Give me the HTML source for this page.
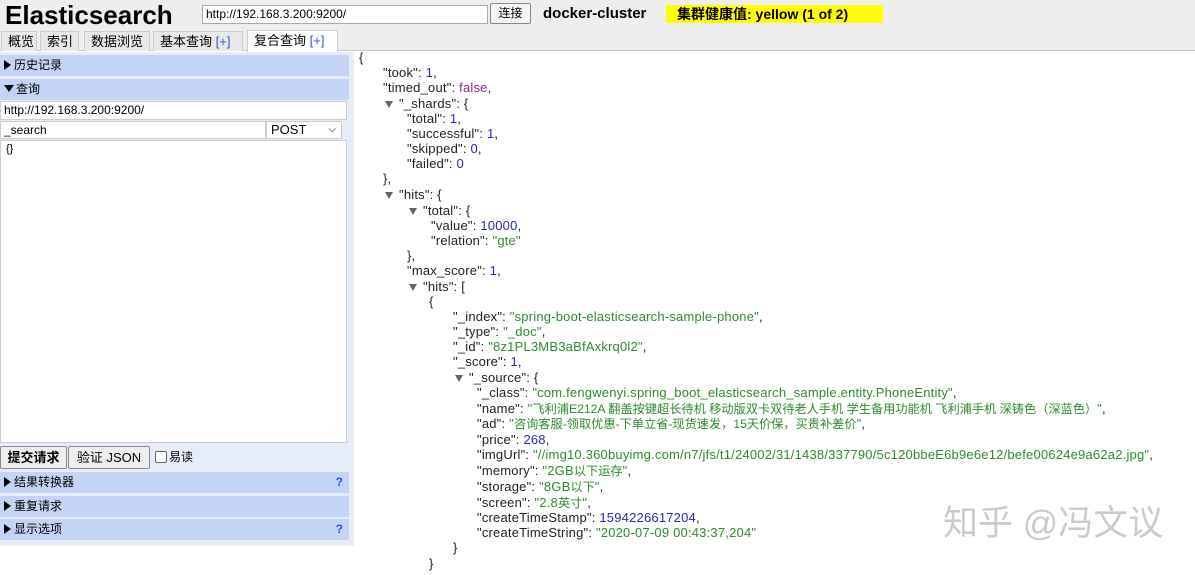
<!DOCTYPE html>
<html><head><meta charset="utf-8"><style>
body{margin:0;width:1195px;height:575px;background:#fff;font-family:"Liberation Sans","Noto Sans CJK SC",sans-serif;position:relative;overflow:hidden;font-size:12px;color:#000}
.a{position:absolute;white-space:nowrap}
.hdr{left:0;top:0;width:1195px;height:50px;background:#eeeeee;border-bottom:1px solid #c8c8c8}
.tab{top:31px;height:20px;border:1px solid #ccc;border-bottom:none;background:#e8e8e8;font-size:13px;line-height:20px;padding:0 6px;box-sizing:border-box}
.bar{left:0;width:349px;height:21px;background:#c4d4f6;font-size:12px;line-height:21px;padding-left:4px;box-sizing:border-box}
.tri{display:inline-block;width:0;height:0;border-top:5px solid transparent;border-bottom:5px solid transparent;border-left:7px solid #000;margin-right:3px;vertical-align:-1px}
.trid{display:inline-block;width:0;height:0;border-left:5px solid transparent;border-right:5px solid transparent;border-top:7px solid #000;margin-right:2px;vertical-align:1px}
.q{position:absolute;right:6px;top:0;color:#3355cc;font-weight:bold}
.j{position:absolute;white-space:nowrap;font-size:13px;letter-spacing:0.2px;line-height:15px;color:#222}
.c{font-size:12.2px;letter-spacing:0}
.n{color:#2a2aa8}.s{color:#2f8a2f}.f{color:#8a2a8a}
.jt{display:inline-block;width:0;height:0;border-left:4px solid transparent;border-right:4px solid transparent;border-top:7px solid #666;margin-right:6px}
</style></head><body>
<div class="a hdr"></div>
<div class="a" style="left:5px;top:0px;font-size:26px;font-weight:bold;line-height:30px">Elasticsearch</div>
<div class="a" style="left:202px;top:5px;width:286px;height:19px;background:#fff;border:1px solid #aaa;box-sizing:border-box;font-size:12px;line-height:17px;padding-left:3px">http://192.168.3.200:9200/</div>
<div class="a" style="left:490px;top:3px;width:41px;height:21px;background:#f4f4f4;border:1px solid #888;border-radius:2px;box-sizing:border-box;font-size:12px;line-height:19px;text-align:center">连接</div>
<div class="a" style="left:543px;top:5px;font-size:15px;font-weight:bold;line-height:18px">docker-cluster</div>
<div class="a" style="left:666px;top:5px;width:217px;height:18px;background:#ffff00;font-size:14px;font-weight:bold;line-height:18px;padding-left:11px;box-sizing:border-box">集群健康值: yellow (1 of 2)</div>
<div class="a tab" style="left:1px;width:36px">概览</div>
<div class="a tab" style="left:40px;width:39px">索引</div>
<div class="a tab" style="left:84px;width:66px">数据浏览</div>
<div class="a tab" style="left:153px;width:90px">基本查询 <span style="color:#3355cc">[+]</span></div>
<div class="a tab" style="left:247px;width:91px;background:#fff;height:22px;top:30px">复合查询 <span style="color:#3355cc">[+]</span></div>
<div class="a" style="left:0;top:52px;width:354px;height:494px;background:#e6edf9"></div>
<div class="a bar" style="top:55px"><span class="tri"></span>历史记录</div>
<div class="a bar" style="top:79px"><span class="trid"></span>查询</div>
<div class="a" style="left:0;top:101px;width:347px;height:19px;background:#fff;border:1px solid #ccc;box-sizing:border-box;line-height:17px;padding-left:3px">http://192.168.3.200:9200/</div>
<div class="a" style="left:0;top:121px;width:266px;height:18px;background:#fff;border:1px solid #ccc;box-sizing:border-box;line-height:16px;padding-left:3px">_search</div>
<div class="a" style="left:266px;top:121px;width:76px;height:18px;background:#fff;border:1px solid #ccc;box-sizing:border-box;line-height:16px;padding-left:4px;font-size:13px">POST<span style="position:absolute;right:5px;top:0;font-size:10px">&#x2335;</span></div>
<div class="a" style="left:0;top:140px;width:347px;height:303px;background:#fff;border:1px solid #ccc;box-sizing:border-box;padding:2px 5px;line-height:13px;font-size:11px">{}</div>
<div class="a" style="left:0;top:446px;width:67px;height:23px;background:#eee;border:1px solid #888;border-radius:2px;box-sizing:border-box;font-weight:bold;font-size:13px;line-height:21px;text-align:center">提交请求</div>
<div class="a" style="left:68px;top:446px;width:82px;height:23px;background:#eee;border:1px solid #888;border-radius:2px;box-sizing:border-box;font-size:13px;line-height:21px;text-align:center">验证 JSON</div>
<div class="a" style="left:155px;top:451px;width:12px;height:12px;background:#fff;border:1px solid #666;border-radius:2px;box-sizing:border-box"></div>
<div class="a" style="left:169px;top:450px;font-size:12px;line-height:15px">易读</div>
<div class="a bar" style="top:472px"><span class="tri"></span>结果转换器<span class="q">?</span></div>
<div class="a bar" style="top:496px"><span class="tri"></span>重复请求</div>
<div class="a bar" style="top:519px"><span class="tri"></span>显示选项<span class="q">?</span></div>

<div class="j" style="left:359px;top:50px">{</div>
<div class="j" style="left:383px;top:65px">"took": <span class="n">1</span>,</div>
<div class="j" style="left:383px;top:80px">"timed_out": <span class="f">false</span>,</div>
<div class="j" style="left:385px;top:96px"><span class="jt"></span>"_shards": {</div>
<div class="j" style="left:407px;top:111px">"total": <span class="n">1</span>,</div>
<div class="j" style="left:407px;top:126px">"successful": <span class="n">1</span>,</div>
<div class="j" style="left:407px;top:141px">"skipped": <span class="n">0</span>,</div>
<div class="j" style="left:407px;top:156px">"failed": <span class="n">0</span></div>
<div class="j" style="left:383px;top:171px">},</div>
<div class="j" style="left:385px;top:187px"><span class="jt"></span>"hits": {</div>
<div class="j" style="left:409px;top:203px"><span class="jt"></span>"total": {</div>
<div class="j" style="left:431px;top:218px">"value": <span class="n">10000</span>,</div>
<div class="j" style="left:431px;top:233px">"relation": <span class="s">"gte"</span></div>
<div class="j" style="left:407px;top:248px">},</div>
<div class="j" style="left:407px;top:263px">"max_score": <span class="n">1</span>,</div>
<div class="j" style="left:409px;top:279px"><span class="jt"></span>"hits": [</div>
<div class="j" style="left:429px;top:294px">{</div>
<div class="j" style="left:453px;top:309px">"_index": <span class="s">"spring-boot-elasticsearch-sample-phone"</span>,</div>
<div class="j" style="left:453px;top:324px">"_type": <span class="s">"_doc"</span>,</div>
<div class="j" style="left:453px;top:339px">"_id": <span class="s">"8z1PL3MB3aBfAxkrq0l2"</span>,</div>
<div class="j" style="left:453px;top:354px">"_score": <span class="n">1</span>,</div>
<div class="j" style="left:455px;top:370px"><span class="jt"></span>"_source": {</div>
<div class="j" style="left:477px;top:385px">"_class": <span class="s">"com.fengwenyi.spring_boot_elasticsearch_sample.entity.PhoneEntity"</span>,</div>
<div class="j" style="left:477px;top:401px">"name": <span class="s">"<span class="c">飞利浦E212A 翻盖按键超长待机 移动版双卡双待老人手机 学生备用功能机 飞利浦手机 深铸色（深蓝色）</span>"</span>,</div>
<div class="j" style="left:477px;top:416px">"ad": <span class="s">"<span class="c">咨询客服-领取优惠-下单立省-现货速发，15天价保，买贵补差价</span>"</span>,</div>
<div class="j" style="left:477px;top:432px">"price": <span class="n">268</span>,</div>
<div class="j" style="left:477px;top:447px">"imgUrl": <span class="s">"//img10.360buyimg.com/n7/jfs/t1/24002/31/1438/337790/5c120bbeE6b9e6e12/befe00624e9a62a2.jpg"</span>,</div>
<div class="j" style="left:477px;top:463px">"memory": <span class="s">"2GB<span class="c">以下运存</span>"</span>,</div>
<div class="j" style="left:477px;top:479px">"storage": <span class="s">"8GB<span class="c">以下</span>"</span>,</div>
<div class="j" style="left:477px;top:495px">"screen": <span class="s">"2.8<span class="c">英寸</span>"</span>,</div>
<div class="j" style="left:477px;top:510px">"createTimeStamp": <span class="n">1594226617204</span>,</div>
<div class="j" style="left:477px;top:525px">"createTimeString": <span class="s">"2020-07-09 00:43:37,204"</span></div>
<div class="j" style="left:453px;top:540px">}</div>
<div class="j" style="left:429px;top:556px">}</div>
<div class="a" style="left:943px;top:503px;font-size:35px;color:rgba(150,150,150,0.5);line-height:42px">知乎 @冯文议</div>
</body></html>
